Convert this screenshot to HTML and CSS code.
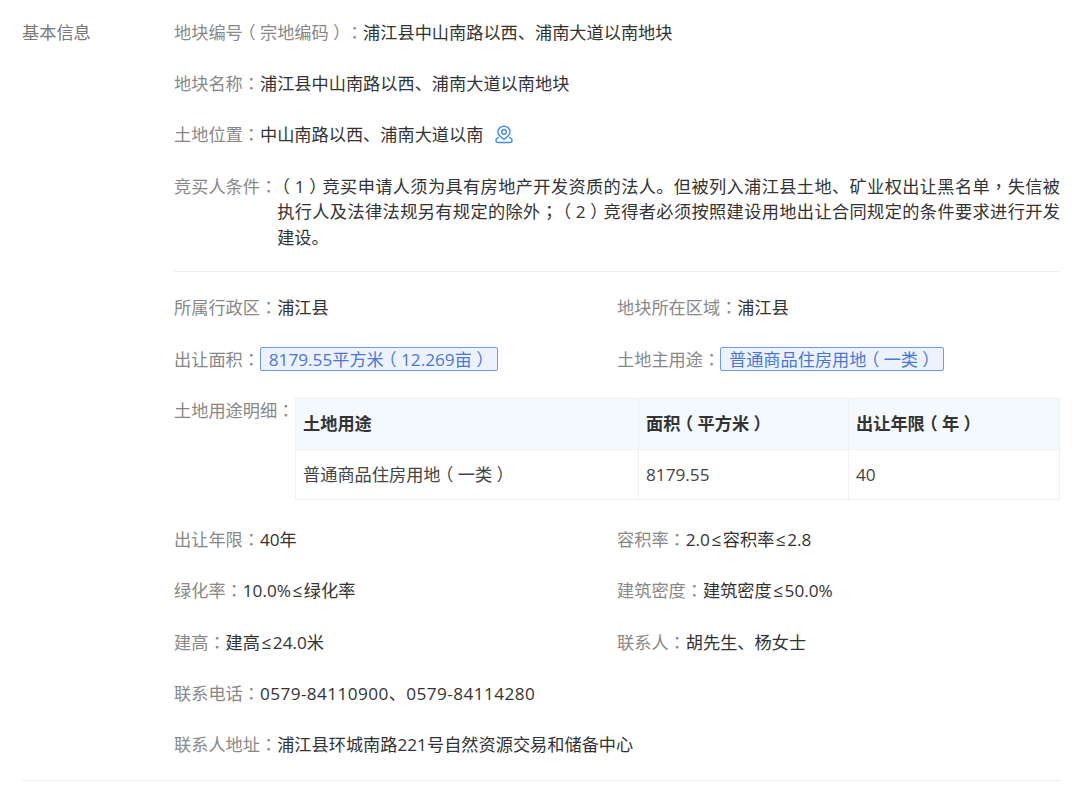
FILE: index.html
```html
<!DOCTYPE html>
<html>
<head>
<meta charset="utf-8">
<title>基本信息</title>
<link rel="stylesheet" href="styles.css">
</head>
<body>
<section class="section">
  <h2 class="section-title">基本信息</h2>
  <div class="content">
    <div class="group group-first">
      <div class="row"><span class="label">地块编号<i class="p po">（</i>宗地编码<i class="p po">）</i><i class="p">：</i></span><span class="value">浦江县中山南路以西、浦南大道以南地块</span></div>
      <div class="row"><span class="label">地块名称<i class="p">：</i></span><span class="value">浦江县中山南路以西、浦南大道以南地块</span></div>
      <div class="row"><span class="label">土地位置<i class="p">：</i></span><span class="value">中山南路以西、浦南大道以南</span>
        <svg class="pin" viewBox="0 0 18 18" width="18" height="19" aria-hidden="true"><path d="M9 13.8C6 11.8 2.9 9.4 2.9 6.3a6.1 5.6 0 0 1 12.2 0c0 3.1-3.1 5.5-6.1 7.5z" fill="none" stroke="#4a90e2" stroke-width="1.5"/><circle cx="9" cy="6.4" r="2.3" fill="none" stroke="#4a90e2" stroke-width="1.5"/><path d="M3.8 11.6c-1.7.8-2.9 1.8-2.9 3.1 0 1.4 1.1 2.3 2.5 2.3h11.2c1.4 0 2.5-.9 2.5-2.3 0-1.3-1.2-2.3-2.9-3.1" fill="none" stroke="#4a90e2" stroke-width="1.5"/></svg>
      </div>
      <div class="row"><span class="label">竞买人条件<i class="p">：</i></span><span class="value value-wrap"><i class="p po">（</i>1<i class="p po">）</i>竞买申请人须为具有房地产开发资质的法人。但被列入浦江县土地、矿业权出让黑名单<i class="p">，</i>失信被执行人及法律法规另有规定的除外<i class="p">；</i><i class="p po">（</i>2<i class="p po">）</i>竞得者必须按照建设用地出让合同规定的条件要求进行开发建设。</span></div>
    </div>
    <div class="group">
      <div class="cols">
        <div class="row"><span class="label">所属行政区<i class="p">：</i></span><span class="value">浦江县</span></div>
        <div class="row"><span class="label">地块所在区域<i class="p">：</i></span><span class="value">浦江县</span></div>
        <div class="row"><span class="label">出让面积<i class="p">：</i></span><span class="tag">8179.55平方米<i class="p po">（</i>12.269亩<i class="p po">）</i></span></div>
        <div class="row"><span class="label">土地主用途<i class="p">：</i></span><span class="tag">普通商品住房用地<i class="p po">（</i>一类<i class="p po">）</i></span></div>
      </div>
      <div class="table-row">
        <span class="label">土地用途明细<i class="p">：</i></span>
        <table class="table">
          <thead><tr><th class="c1">土地用途</th><th class="c2">面积<i class="p po">（</i>平方米<i class="p po">）</i></th><th>出让年限<i class="p po">（</i>年<i class="p po">）</i></th></tr></thead>
          <tbody><tr><td>普通商品住房用地<i class="p po">（</i>一类<i class="p po">）</i></td><td>8179.55</td><td>40</td></tr></tbody>
        </table>
      </div>
      <div class="cols">
        <div class="row"><span class="label">出让年限<i class="p">：</i></span><span class="value">40年</span></div>
        <div class="row"><span class="label">容积率<i class="p">：</i></span><span class="value">2.0<i class="le">≤</i>容积率<i class="le">≤</i>2.8</span></div>
        <div class="row"><span class="label">绿化率<i class="p">：</i></span><span class="value">10.0%<i class="le">≤</i>绿化率</span></div>
        <div class="row"><span class="label">建筑密度<i class="p">：</i></span><span class="value">建筑密度<i class="le">≤</i>50.0%</span></div>
        <div class="row"><span class="label">建高<i class="p">：</i></span><span class="value">建高<i class="le">≤</i>24.0米</span></div>
        <div class="row"><span class="label">联系人<i class="p">：</i></span><span class="value">胡先生、杨女士</span></div>
      </div>
      <div class="row"><span class="label">联系电话<i class="p">：</i></span><span class="value phone">0579-84110900、0579-84114280</span></div>
      <div class="row"><span class="label">联系人地址<i class="p">：</i></span><span class="value">浦江县环城南路221号自然资源交易和储备中心</span></div>
    </div>
  </div>
</section>
</body>
</html>
```
FILE: styles.css
```css
* { box-sizing: border-box; }
html, body { margin: 0; padding: 0; background: #fff; }
body {
  width: 1080px;
  height: 792px;
  overflow: hidden;
  font-family: "Open Sans", "Noto Sans CJK SC", sans-serif;
  font-size: 17.2px;
  line-height: 25.7px;
  color: #333;
  text-spacing-trim: space-all;
}
.section {
  display: flex;
  margin: 0 20px 0 22px;
  padding: 19.5px 0 21.5px;
  border-bottom: 1px solid #eee;
}
.section-title {
  flex: none;
  width: 152px;
  margin: 0;
  font-size: inherit;
  font-weight: 400;
  color: #777;
}
.content { flex: 1; min-width: 0; }
.group-first {
  padding-bottom: 20.5px;
  margin-bottom: 23px;
  border-bottom: 1px solid #eee;
}
.row {
  display: flex;
  align-items: flex-start;
  margin-bottom: 25.7px;
}
.group > .row:last-child { margin-bottom: 0; }
.label { flex: none; color: #888; }
.p {
  font-style: normal;
  font-family: "Noto Sans CJK TC", sans-serif;
  line-height: 0;
}
.po { font-feature-settings: "halt"; padding: 0 .25em; }
.le { font-style: normal; padding: 0 1.5px; }
.value { color: #333; }
.value-wrap { flex: 1; min-width: 0; text-align: justify; }
.phone { letter-spacing: .41px; }
.pin { margin: 3px 0 0 12px; flex: none; }
.cols {
  display: grid;
  grid-template-columns: 443px 443px;
}
.tag {
  flex: none;
  height: 24.4px;
  padding: 0 7.8px;
  line-height: 23px;
  white-space: nowrap;
  color: #4a77d4;
  background: #edf3fe;
  border: 1px solid #6f9be0;
  border-radius: 2px;
}
.table-row {
  display: flex;
  align-items: flex-start;
  margin-bottom: 26.5px;
}
.table-row .label { width: 121px; }
.table {
  flex: 1;
  width: 765px;
  border-collapse: collapse;
  table-layout: fixed;
  color: #444;
}
.table th, .table td {
  height: 50.6px;
  padding: 0 7px;
  text-align: left;
  border: 1px solid #f0f0f0;
}
.table th { font-weight: 700; color: #333; background: #f4f9fe; }
.c1 { width: 343px; }
.c2 { width: 210px; }
```
